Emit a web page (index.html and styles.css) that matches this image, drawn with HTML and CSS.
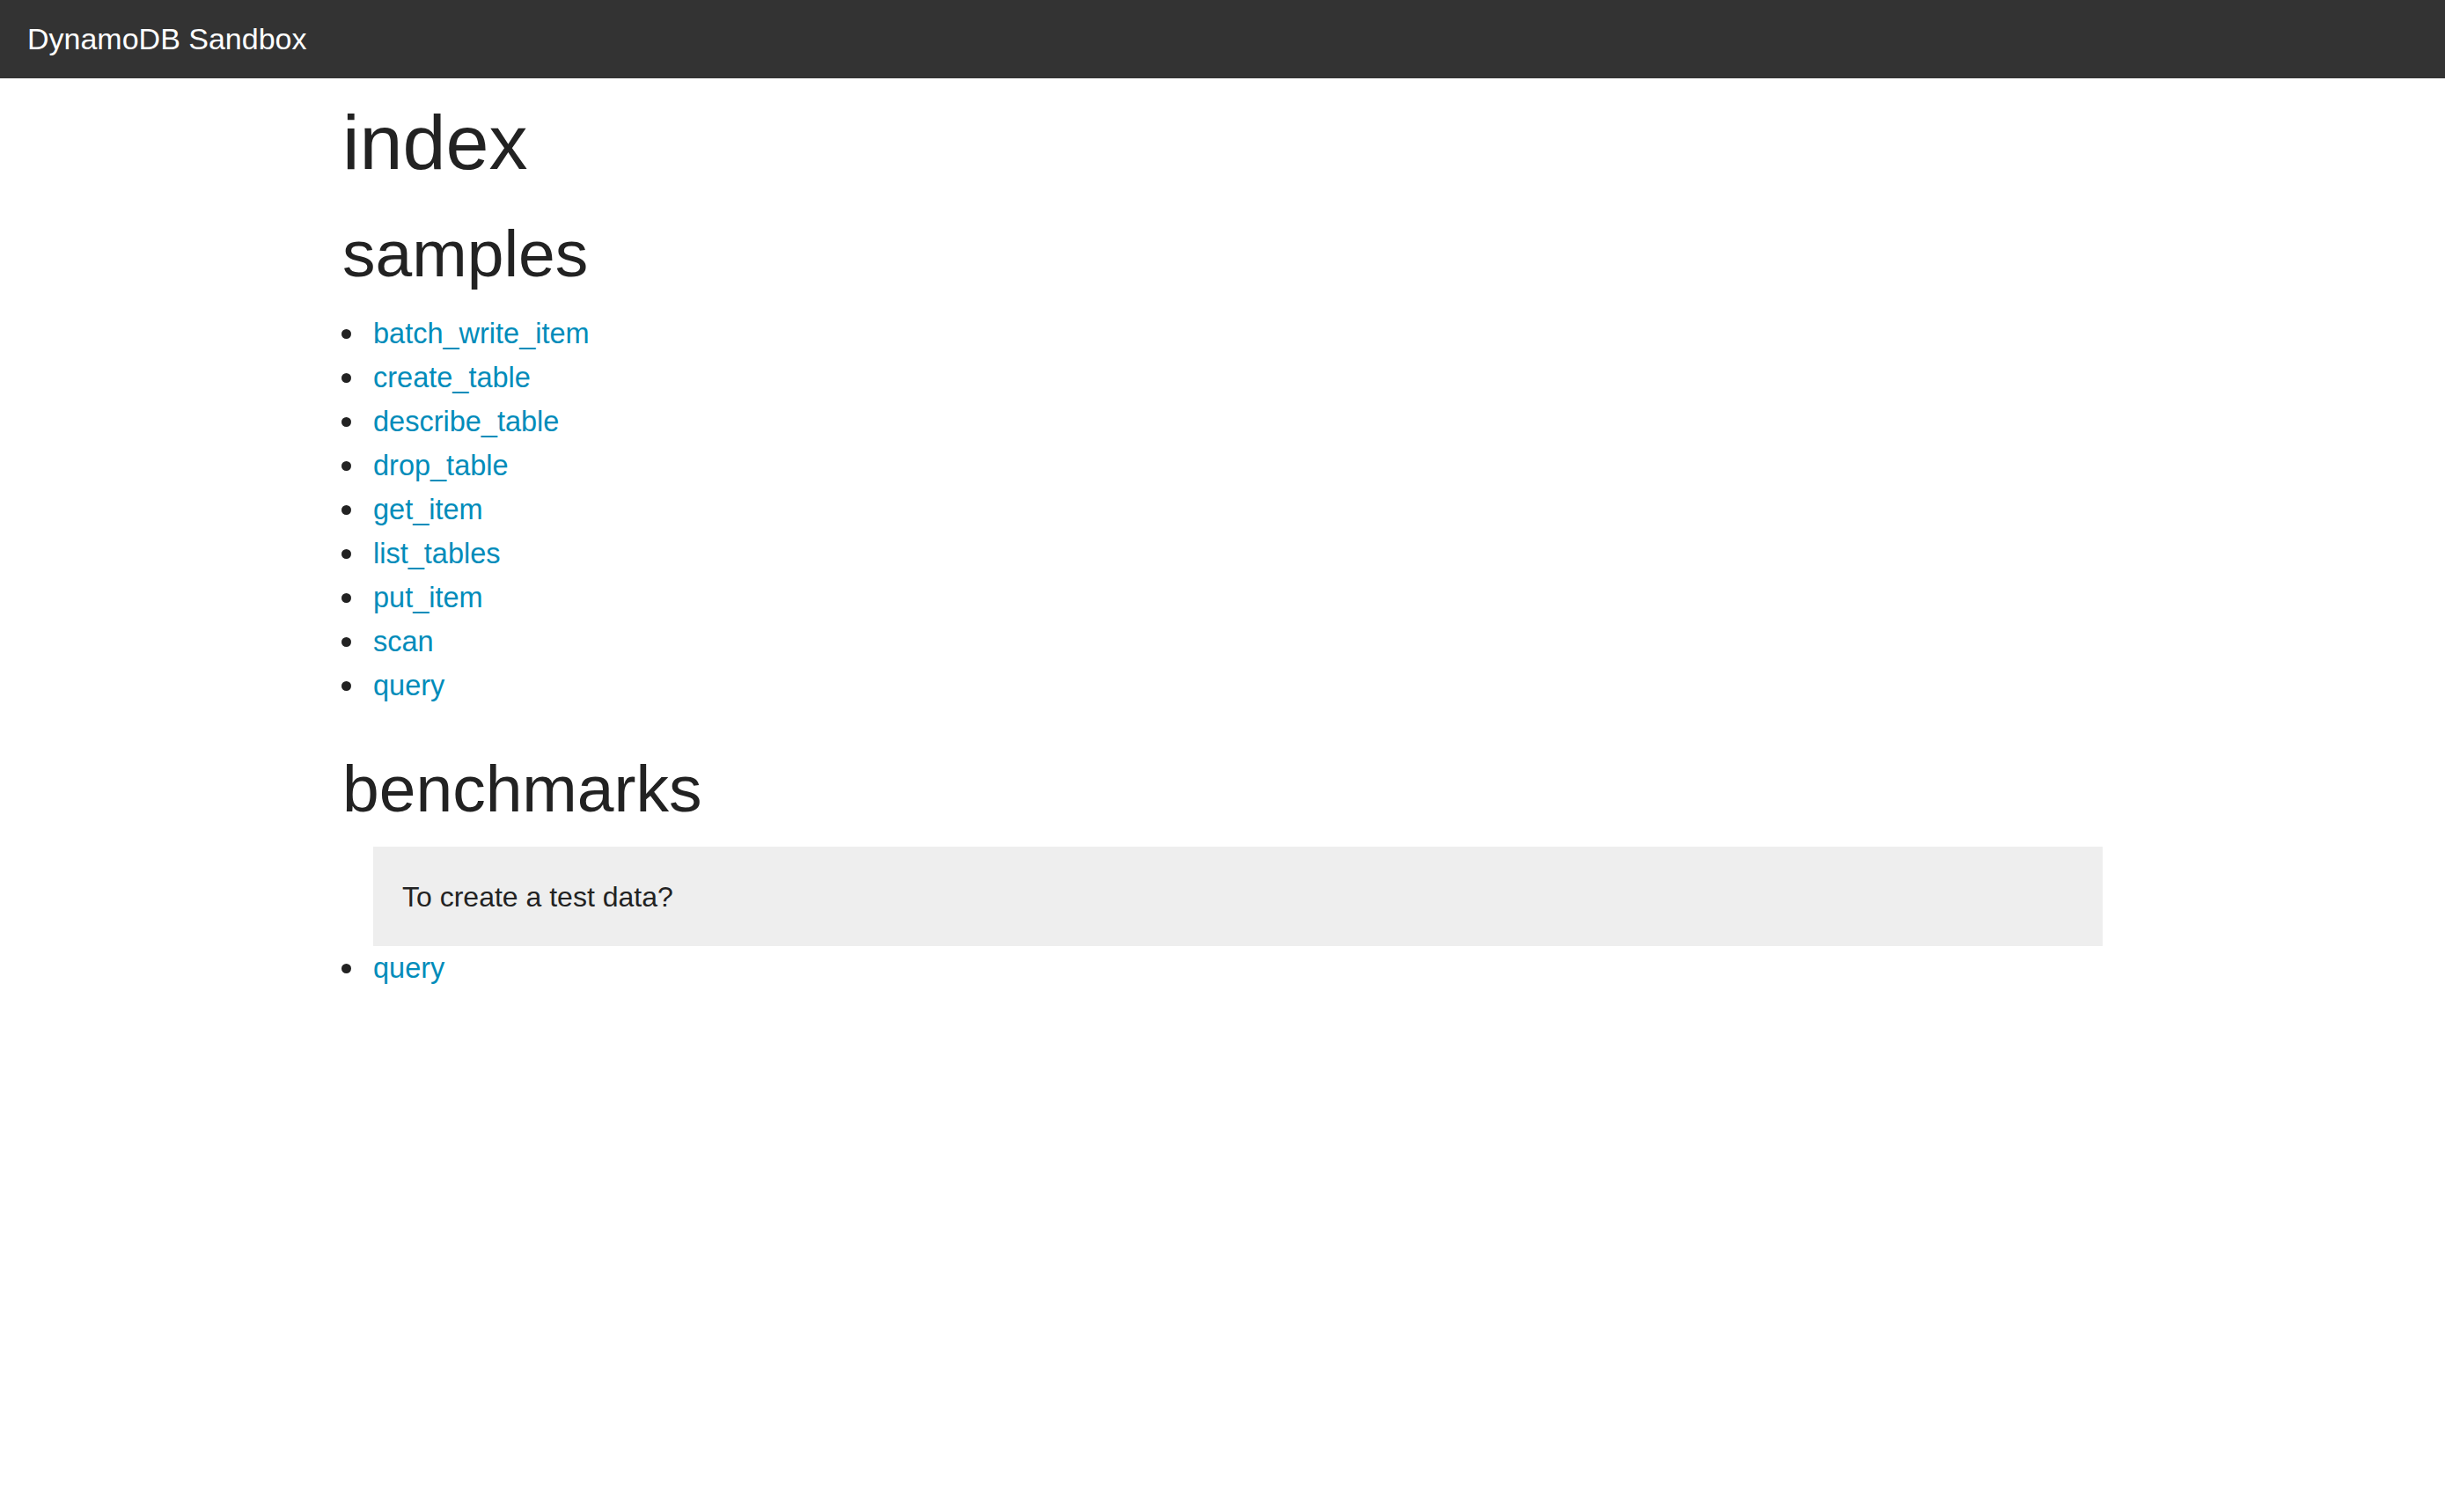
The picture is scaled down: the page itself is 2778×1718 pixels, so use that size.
FILE: index.html
```html
<!DOCTYPE html>
<html lang="en">
<head>
<meta charset="utf-8">
<title>DynamoDB Sandbox</title>
<link rel="stylesheet" href="styles.css">
</head>
<body>
<header class="navbar">
  <a class="brand" href="#">DynamoDB Sandbox</a>
</header>
<main class="container">
  <h1 class="page-title">index</h1>
  <h2 class="section-title">samples</h2>
  <ul class="link-list">
    <li><a href="#">batch_write_item</a></li>
    <li><a href="#">create_table</a></li>
    <li><a href="#">describe_table</a></li>
    <li><a href="#">drop_table</a></li>
    <li><a href="#">get_item</a></li>
    <li><a href="#">list_tables</a></li>
    <li><a href="#">put_item</a></li>
    <li><a href="#">scan</a></li>
    <li><a href="#">query</a></li>
  </ul>
  <h2 class="section-title section-gap">benchmarks</h2>
  <ul class="link-list">
    <blockquote class="note">To create a test data?</blockquote>
    <li><a href="#">query</a></li>
  </ul>
</main>
</body>
</html>
```
FILE: styles.css
```css
html, body {
  margin: 0;
  padding: 0;
  background: #ffffff;
}
body {
  font-family: "Liberation Sans", Arial, Helvetica, sans-serif;
  color: #222222;
}
.navbar {
  height: 89px;
  background: #333333;
  display: flex;
  align-items: center;
  padding-left: 31px;
}
.brand {
  color: #ffffff;
  font-size: 34px;
  text-decoration: none;
}
.container {
  width: 2000px;
  margin: 0 auto;
}
.page-title {
  font-size: 88px;
  line-height: 96px;
  font-weight: normal;
  margin: 25px 0 0 0;
}
.section-title {
  font-size: 75px;
  line-height: 80px;
  font-weight: normal;
  margin: 38px 0 0 0;
}
.section-gap {
  margin-top: 52px;
}
.link-list {
  margin: 26px 0 0 0;
  padding-left: 35px;
  font-size: 32.5px;
  line-height: 50px;
}
.link-list li {
  list-style: none;
}
.link-list li::before {
  content: "";
  display: inline-block;
  width: 11px;
  height: 11px;
  border-radius: 50%;
  background: #222222;
  margin-left: -36px;
  margin-right: 25px;
  vertical-align: middle;
  position: relative;
  top: -2px;
}
.link-list a {
  color: #008cba;
  text-decoration: none;
}
.note {
  margin: 0;
  background: #eeeeee;
  padding: 37px 33px 36px 33px;
  font-size: 32px;
  line-height: 40px;
  color: #222222;
}
```
